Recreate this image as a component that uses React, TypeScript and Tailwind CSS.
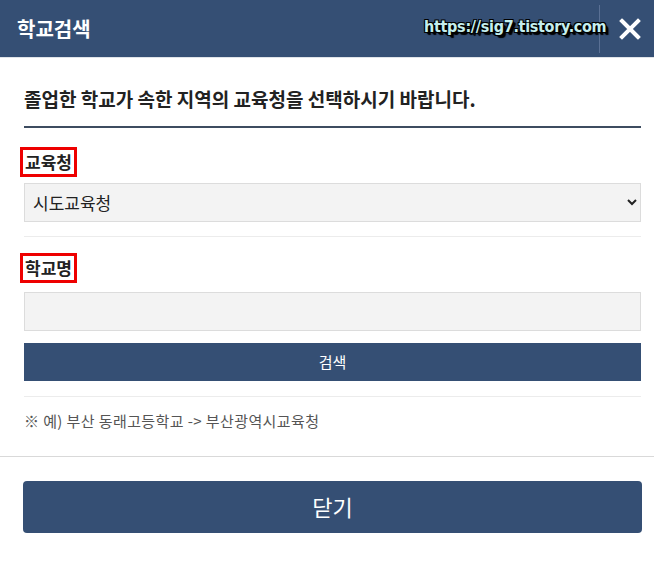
import React, { useState } from "react";

const font = { fontFamily: '"Noto Sans CJK KR", "Noto Sans", sans-serif' };

const SchoolSearch: React.FC = () => {
  const [office, setOffice] = useState("");
  const [school, setSchool] = useState("");

  return (
    <div className="relative w-[654px] h-[564px] bg-white" style={font}>
      {/* 헤더 */}
      <div className="flex h-[58px] items-center bg-[#354f74] border-b border-[#dfe3e8]">
        <h1 className="pl-[17px] text-[20px] font-bold text-white">학교검색</h1>
        <div className="ml-auto flex h-full items-center">
          <div className="h-[48px] w-px bg-[#5a7094]" />
          <button className="flex w-[54px] items-center justify-center pl-[6px] text-white">
            <svg width="22" height="22" viewBox="0 0 22 22">
              <path d="M3 3 L19 19 M19 3 L3 19" stroke="white" strokeWidth="4" strokeLinecap="square" />
            </svg>
          </button>
        </div>
      </div>

      {/* 워터마크 */}
      <span
        className="absolute left-[424px] top-[15px] text-[16px] font-bold text-[#c4eeee] tracking-[-0.3px]"
        style={{ fontFamily: '"DejaVu Sans Condensed", "Liberation Sans Narrow", sans-serif', textShadow: "1px 1px 0 #000, -1px -1px 0 #000, 1px -1px 0 #000, -1px 1px 0 #000, 2px 2px 1px #000, 3px 3px 1px #000" }}
      >
        https://sig7.tistory.com
      </span>

      {/* 본문 */}
      <div className="pl-[24px] pr-[13px] pt-[28px]">
        <p className="pb-[14px] text-[19px] font-bold text-[#222] border-b-2 border-[#3d4c60] leading-[26px]">
          졸업한 학교가 속한 지역의 교육청을 선택하시기 바랍니다.
        </p>

        <div className="pt-[19px] pb-[14px] border-b border-[#ececec]">
          <label className="inline-block -ml-[4px] px-[2px] border-[3px] border-[#e00] text-[17px] font-bold text-[#222] leading-[24px]">
            교육청
          </label>
          <select
            value={office}
            onChange={(e) => setOffice(e.target.value)}
            className="mt-[6px] block h-[39px] w-full border border-[#dcdcdc] bg-[#f3f3f3] px-[4px] text-[17px] text-[#222]"
            style={font}
          >
            <option value="">시도교육청</option>
            <option value="부산">부산광역시교육청</option>
          </select>
        </div>

        <div className="pt-[16px] pb-[15px] border-b border-[#ececec]">
          <label className="inline-block -ml-[4px] px-[2px] border-[3px] border-[#e00] text-[17px] font-bold text-[#222] leading-[24px]">
            학교명
          </label>
          <input
            type="text"
            value={school}
            onChange={(e) => setSchool(e.target.value)}
            className="mt-[9px] block h-[39px] w-full border border-[#dcdcdc] bg-[#f3f3f3] px-[8px] text-[16px]"
          />
          <button className="mt-[12px] block h-[38px] w-full bg-[#354f74] text-[15px] text-white">검색</button>
        </div>

        <p className="pt-[13px] pb-[23px] text-[15px] text-[#555] tracking-[0.4px]">
          ※ 예) 부산 동래고등학교 -&gt; 부산광역시교육청
        </p>
      </div>

      <div className="border-t border-[#d9d9d9] pl-[23px] pr-[12px] pt-[24px]">
        <button className="block h-[52px] w-full rounded-[4px] bg-[#354f74] text-[22px] text-white">닫기</button>
      </div>
    </div>
  );
};

export default function App() {
  return <SchoolSearch />;
}
